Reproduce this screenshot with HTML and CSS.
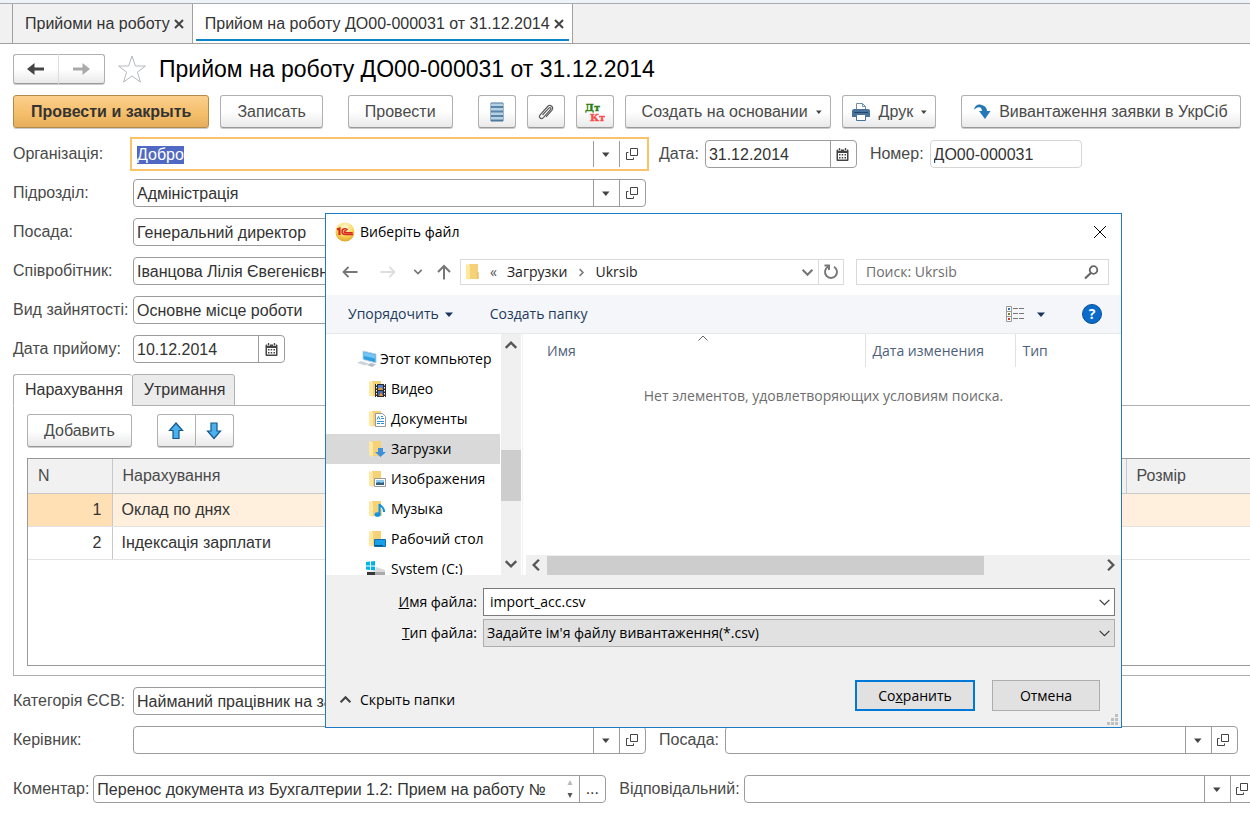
FILE: index.html
```html
<!DOCTYPE html>
<html lang="uk">
<head>
<meta charset="utf-8">
<title>Прийом на роботу ДО00-000031 от 31.12.2014</title>
<link rel="stylesheet" href="styles.css">
</head>
<body>
<svg class="defs" aria-hidden="true">
  <symbol id="caret" viewBox="0 0 8 5"><path d="M0 0.500h7.500L3.800 5z" fill="#444"/></symbol>
  <symbol id="open" viewBox="0 0 13 13"><path d="M4.5 0.5h7v7h-7z" fill="none" stroke="#444"/><path d="M2.5 4.5h-2v7h7v-2" fill="none" stroke="#444"/></symbol>
  <symbol id="calendar" viewBox="0 0 13 13"><path d="M1.500 1.500h10a1 1 0 0 1 1 1v9.500a1 1 0 0 1-1 1h-10a1 1 0 0 1-1-1v-9.500a1 1 0 0 1 1-1z" fill="#444"/><path d="M2 5h9v6.500H2z" fill="#fff"/><path d="M3 6h1.500v1.500H3zM5.700 6h1.500v1.500H5.700zM8.500 6H10v1.500H8.500zM3 9h1.500v1.500H3zM5.700 9h1.500v1.500H5.700zM8.500 9H10v1.500H8.500z" fill="#444"/><path d="M3.500 0v3M9.500 0v3" stroke="#fff" stroke-width="2.500"/><path d="M3.500 0v2.500M9.500 0v2.500" stroke="#444" stroke-width="1.300"/></symbol>
  <symbol id="folder" viewBox="0 0 16 16"><path d="M3 0h9v15H3z" fill="#f5d177"/><path d="M0 0l4 1.500V16l-4-1.500z" fill="#ffe9a2"/><path d="M12 8v7" stroke="#dbb04c"/></symbol>
  <symbol id="chev-down" viewBox="0 0 12 12"><path d="M1.500 3.500L6 8l4.500-4.500" fill="none" stroke="currentColor" stroke-width="2"/></symbol>
  <symbol id="chev-thin" viewBox="0 0 12 12"><path d="M1.500 3.500L6 8l4.500-4.500" fill="none" stroke="currentColor"/></symbol>
  <symbol id="chev-up" viewBox="0 0 12 12"><path d="M1.500 8.500L6 4l4.500 4.500" fill="none" stroke="currentColor" stroke-width="2"/></symbol>
  <symbol id="chev-left" viewBox="0 0 12 12"><path d="M8.500 1.500L4 6l4.500 4.500" fill="none" stroke="currentColor" stroke-width="2"/></symbol>
  <symbol id="chev-right" viewBox="0 0 12 12"><path d="M3.500 1.500L8 6l-4.500 4.500" fill="none" stroke="currentColor" stroke-width="2"/></symbol>
</svg>

<nav class="doc-tabs">
  <div class="doc-tab"><a href="#list">Прийоми на роботу</a><button type="button" class="tab-close" aria-label="Закрити"><svg width="10" height="10" viewBox="0 0 10 10"><path d="M1 1l8 8M9 1L1 9" stroke="#444" stroke-width="2"/></svg></button></div>
  <div class="doc-tab active"><a href="#doc">Прийом на роботу ДО00-000031 от 31.12.2014</a><button type="button" class="tab-close" aria-label="Закрити"><svg width="10" height="10" viewBox="0 0 10 10"><path d="M1 1l8 8M9 1L1 9" stroke="#444" stroke-width="2"/></svg></button></div>
</nav>

<main class="document">
  <header class="heading">
    <div class="btn-group history">
      <button type="button" class="btn" aria-label="Назад"><svg width="18" height="14" viewBox="0 0 18 14"><path d="M0 7l7.500-6v4.500H17v3H7.500V13z" fill="#444"/></svg></button>
      <button type="button" class="btn" aria-label="Вперед"><svg width="18" height="14" viewBox="0 0 18 14"><path d="M17 7l-7.500-6v4.500H0v3h9.500V13z" fill="#aaa"/></svg></button>
    </div>
    <button type="button" class="star" aria-label="Вибране"><svg width="30" height="28" viewBox="0 0 30 28"><path d="M15 1l3.400 10h10.100l-8.100 6.200 3.100 9.800-8.500-6-8.500 6 3.100-9.800L1.500 11h10.100z" fill="#fff" stroke="#b4b8bd"/></svg></button>
    <h1>Прийом на роботу ДО00-000031 от 31.12.2014</h1>
  </header>

  <div class="commands">
    <button type="button" class="btn primary">Провести и закрыть</button>
    <button type="button" class="btn">Записать</button>
    <button type="button" class="btn spaced">Провести</button>
    <button type="button" class="btn icon spaced" aria-label="Список"><svg width="14" height="20" viewBox="0 0 14 20"><path d="M1 1h12v18H1z" fill="#5b86a8" stroke="#47708f"/><path d="M1 1.500h12v2.500H1zM1 6h12v2.500H1zM1 10.500h12v2.500H1zM1 15h12v2.500H1z" fill="#b5d1e6"/></svg></button>
    <button type="button" class="btn icon" aria-label="Файли"><svg width="18" height="18" viewBox="0 0 18 18"><path d="M5.500 12l6.300-6.800c1.300-1.300 2.900 0 1.600 1.500l-7 7.900c-2.400 2.300-5.300-.2-3.300-2.700l7.500-8.400c2.700-2.600 6.700.6 4.200 3.800l-5.800 6.600" fill="none" stroke="#5a5a5a" stroke-width="1.200"/></svg></button>
    <button type="button" class="btn icon" aria-label="Проводки"><svg width="20" height="20" viewBox="0 0 20 20"><g font-family="DejaVu Serif, serif" font-weight="bold" font-size="10" stroke-width=".4"><text x="0" y="9" fill="#2b7d11" stroke="#2b7d11">Дт</text><text x="5" y="19" fill="#fb4c4c" stroke="#fb4c4c">Кт</text></g></svg></button>
    <button type="button" class="btn create">Создать на основании<svg class="drop" width="6" height="4"><use href="#caret"/></svg></button>
    <button type="button" class="btn print"><svg width="18" height="18" viewBox="0 0 18 18"><path d="M4.500 7V.5h6l3 3V7z" fill="#fff" stroke="#6d8fae"/><path d="M10.500.5v3h3" fill="none" stroke="#6d8fae"/><path d="M2 6h14a2 2 0 0 1 2 2v6H0V8a2 2 0 0 1 2-2z" fill="#4b7299"/><path d="M2 9.500h14" stroke="#21486d"/><path d="M4.500 11.500h9v6h-9z" fill="#fff" stroke="#4b7299"/></svg>Друк<svg class="drop" width="6" height="4"><use href="#caret"/></svg></button>
    <button type="button" class="btn export spaced"><svg width="17" height="16" viewBox="0 0 17 16"><path d="M0 5.500C1 1 4 0 7 .7c4 .8 6 3.300 6 6.300h3.500L11 15 5 7h3c0-2.500-1.500-4-3.500-3.700C3 3.500 2 4.300 0 5.500z" fill="#2478b5"/></svg>Вивантаження заявки в УкрСіб</button>
  </div>

  <form class="details">
    <div class="row">
      <label class="lbl" for="org">Організація:</label>
      <div class="field focused"><input id="org" value="Добро"><button type="button" aria-label="Список"><svg width="8" height="5"><use href="#caret"/></svg></button><button type="button" aria-label="Відкрити"><svg width="13" height="13"><use href="#open"/></svg></button></div>
      <label class="lbl-inline" for="date">Дата:</label>
      <div class="field date"><input id="date" value="31.12.2014"><button type="button" aria-label="Календар"><svg width="13" height="13"><use href="#calendar"/></svg></button></div>
      <label class="lbl-inline" for="num">Номер:</label>
      <div class="field date quiet"><input id="num" value="ДО00-000031"></div>
    </div>
    <div class="row">
      <label class="lbl" for="dep">Підрозділ:</label>
      <div class="field"><input id="dep" value="Адміністрація"><button type="button" aria-label="Список"><svg width="8" height="5"><use href="#caret"/></svg></button><button type="button" aria-label="Відкрити"><svg width="13" height="13"><use href="#open"/></svg></button></div>
    </div>
    <div class="row">
      <label class="lbl" for="post">Посада:</label>
      <div class="field"><input id="post" value="Генеральний директор"></div>
    </div>
    <div class="row">
      <label class="lbl" for="emp">Співробітник:</label>
      <div class="field"><input id="emp" value="Іванцова Лілія Євегенієвна"></div>
    </div>
    <div class="row">
      <label class="lbl" for="kind">Вид зайнятості:</label>
      <div class="field"><input id="kind" value="Основне місце роботи"></div>
    </div>
    <div class="row">
      <label class="lbl" for="start">Дата прийому:</label>
      <div class="field date"><input id="start" value="10.12.2014"><button type="button" aria-label="Календар"><svg width="13" height="13"><use href="#calendar"/></svg></button></div>
    </div>
  </form>

  <section class="pages">
    <div class="page-tabs"><button type="button" class="page-tab current">Нарахування</button><button type="button" class="page-tab">Утримання</button></div>
    <div class="page">
      <div class="page-tools">
        <button type="button" class="btn">Добавить</button>
        <div class="btn-group move">
          <button type="button" class="btn" aria-label="Вгору"><svg width="16" height="18" viewBox="0 0 16 18"><path d="M8 1l6.500 7.500H11V16.500H5V8.500H1.500z" fill="#4ab0ee" stroke="#12588c" stroke-width="1.200"/></svg></button>
          <button type="button" class="btn" aria-label="Вниз"><svg width="16" height="18" viewBox="0 0 16 18"><path d="M8 16.500L1.500 9H5V1h6v8h3.500z" fill="#4ab0ee" stroke="#12588c" stroke-width="1.200"/></svg></button>
        </div>
      </div>
      <div class="grid">
        <table>
          <colgroup><col class="c-num"><col><col class="c-size"></colgroup>
          <thead><tr><th>N</th><th>Нарахування</th><th>Розмір</th></tr></thead>
          <tbody>
            <tr class="selected"><td class="num">1</td><td>Оклад по днях</td><td></td></tr>
            <tr><td class="num">2</td><td>Індексація зарплати</td><td></td></tr>
          </tbody>
        </table>
      </div>
    </div>
  </section>

  <form class="details bottom">
    <div class="row">
      <label class="lbl" for="cat">Категорія ЄСВ:</label>
      <div class="field"><input id="cat" value="Найманий працівник на за"></div>
    </div>
    <div class="row">
      <label class="lbl" for="chief">Керівник:</label>
      <div class="field"><input id="chief"><button type="button" aria-label="Список"><svg width="8" height="5"><use href="#caret"/></svg></button><button type="button" aria-label="Відкрити"><svg width="13" height="13"><use href="#open"/></svg></button></div>
      <label class="lbl-inline" for="chiefpost">Посада:</label>
      <div class="field"><input id="chiefpost"><button type="button" aria-label="Список"><svg width="8" height="5"><use href="#caret"/></svg></button><button type="button" aria-label="Відкрити"><svg width="13" height="13"><use href="#open"/></svg></button></div>
    </div>
    <div class="row last">
      <label for="comment">Коментар:</label>
      <div class="field"><input id="comment" value="Перенос документа из Бухгалтерии 1.2: Прием на работу №"><span class="spin"><svg width="6" height="18" viewBox="0 0 6 18"><path d="M3 0l2.500 5h-5z" fill="#bbb"/><path d="M3 18l2.500-5h-5z" fill="#555"/></svg></span><button type="button" aria-label="Вибрати">...</button></div>
      <label class="lbl-inline" for="resp">Відповідальний:</label>
      <div class="field"><input id="resp"><button type="button" aria-label="Список"><svg width="8" height="5"><use href="#caret"/></svg></button><button type="button" aria-label="Відкрити"><svg width="13" height="13"><use href="#open"/></svg></button></div>
    </div>
  </form>
</main>

<div class="dialog" role="dialog" aria-labelledby="dlg-title">
  <div class="dlg-title">
    <svg width="20" height="20" viewBox="0 0 20 20"><defs><radialGradient id="ball" cx="50%" cy="25%" r="75%"><stop offset="0" stop-color="#fffbd8"/><stop offset=".6" stop-color="#f9d65c"/><stop offset="1" stop-color="#e2a52c"/></radialGradient></defs><circle cx="10" cy="10" r="9.500" fill="url(#ball)"/><path d="M2 7.500L4.500 6.500v6.500" fill="none" stroke="#d7281f" stroke-width="2.200"/><path d="M12.500 8C11.500 6 7 6 7 9.500c0 2 1.500 3 3.500 3H18M11.500 9.300C10.500 8.300 9 9 9.200 10c.2.700 1 .7 2 .7h6.500" fill="none" stroke="#d7281f" stroke-width="1.500"/></svg>
    <h2 id="dlg-title">Виберіть файл</h2>
    <button type="button" class="plain" aria-label="Закрыть"><svg width="12" height="12" viewBox="0 0 12 12"><path d="M0 0l12 12M12 0L0 12" stroke="#000"/></svg></button>
  </div>

  <div class="dlg-nav">
    <button type="button" class="plain nav-back" aria-label="Назад"><svg width="16" height="12" viewBox="0 0 16 12"><path d="M15.500 6H1.500M6.500 1l-5 5 5 5" fill="none" stroke="#777" stroke-width="1.800"/></svg></button>
    <button type="button" class="plain nav-next" aria-label="Вперед"><svg width="16" height="12" viewBox="0 0 16 12"><path d="M.5 6h14M9.500 1l5 5-5 5" fill="none" stroke="#ddd" stroke-width="1.800"/></svg></button>
    <button type="button" class="plain nav-recent" aria-label="Последние"><svg width="10" height="10"><use href="#chev-down"/></svg></button>
    <button type="button" class="plain nav-up" aria-label="Вверх"><svg width="14" height="16" viewBox="0 0 14 16"><path d="M7 15.500V2M1 8l6-6 6 6" fill="none" stroke="#777" stroke-width="2"/></svg></button>
    <div class="address">
      <svg width="16" height="16"><use href="#folder"/></svg>
      <span class="laquo">«</span><a href="#downloads">Загрузки</a><svg class="sep" width="9" height="9"><use href="#chev-right"/></svg><a href="#ukrsib">Ukrsib</a>
      <button type="button" class="plain addr-list" aria-label="Список"><svg width="13" height="13"><use href="#chev-down"/></svg></button>
      <button type="button" class="plain refresh" aria-label="Обновить"><svg width="16" height="16" viewBox="0 0 16 16"><path d="M11 2.800a6 6 0 1 1-6 0M1.500 1.500H6V6" fill="none" stroke="#777" stroke-width="1.900"/></svg></button>
    </div>
    <div class="search"><input type="text" aria-label="Поиск" placeholder="Поиск: Ukrsib"><svg width="15" height="15" viewBox="0 0 15 15"><circle cx="9.500" cy="5" r="3.800" fill="none" stroke="#666" stroke-width="1.800"/><path d="M6.800 8L1 13.500" stroke="#666" stroke-width="2.200"/></svg></div>
  </div>

  <div class="dlg-tools">
    <button type="button" class="plain">Упорядочить<svg width="8" height="5" viewBox="0 0 8 5"><path d="M0 .5h8L4 5z" fill="#1b355c"/></svg></button>
    <button type="button" class="plain">Создать папку</button>
    <button type="button" class="plain view" aria-label="Вид"><svg width="18" height="16" viewBox="0 0 18 16"><path d="M.5.500h5v15h-5zM.5 5.500h5M.5 10.500h5" fill="#fff" stroke="#999"/><path d="M7 2.500h5M13 2.500h5M7 7.500h5M13 7.500h5M7 12.500h5M13 12.500h5" stroke="#777"/><path d="M2 2h2v2H2z" fill="#2b78c5"/><path d="M2 7h2v2H2z" fill="#7a8022"/><path d="M2 12h2v2H2z" fill="#d33a1f"/></svg><svg width="8" height="5" viewBox="0 0 8 5"><path d="M0 .5h8L4 5z" fill="#1b355c"/></svg></button>
    <button type="button" class="help" aria-label="Справка">?</button>
  </div>

  <div class="dlg-body">
    <div class="tree-wrap">
      <ul class="tree">
        <li class="root"><svg width="20" height="18" viewBox="0 0 20 18"><path d="M6 1l13 3v9L6 9.500z" fill="#2f9fe2" stroke="#c5d5e0"/><path d="M7 2l11 2.700v3.800L7 6z" fill="#73c5f3"/><path d="M0 13l4-2 8 2.500-4 2z" fill="#cdd5dc"/><path d="M10 15l4-2 5 1.500-4 2.500z" fill="#b5bec6"/></svg>Этот компьютер</li>
        <li><svg width="17" height="16" viewBox="0 0 17 16"><use href="#folder" width="16" height="16"/><path d="M6 3h11v13H6z" fill="#2b2b2b"/><path d="M9 4h5v5H9z" fill="#4c7fce"/><path d="M9 10h5v5H9z" fill="#3f65b1"/><path d="M9 8l3-2 2 3H9zM10 15l2-4 2 4z" fill="#e09a35"/><path d="M7.500 3v13M15.500 3v13" stroke="#fff" stroke-dasharray="1.500 1.500"/></svg>Видео</li>
        <li><svg width="17" height="16" viewBox="0 0 17 16"><use href="#folder" width="16" height="16"/><path d="M6.500 2.500h7l3 3v10h-10z" fill="#fff" stroke="#999"/><path d="M8 8.500l1.500-3 1.500 3M12 5.500h2M12 7.500h3M8 10.500h7M8 12.500h3M12 12.500h3" fill="none" stroke="#2c8fd8"/></svg>Документы</li>
        <li class="picked"><svg width="17" height="16" viewBox="0 0 17 16"><use href="#folder" width="16" height="16"/><path d="M9 7h5v4h3l-5.500 5L6 11h3z" fill="#3b8fdd"/></svg>Загрузки</li>
        <li><svg width="17" height="16" viewBox="0 0 17 16"><use href="#folder" width="16" height="16"/><path d="M5.500 7.500h11v8h-11z" fill="#fff" stroke="#999"/><path d="M7 9h8v5H7z" fill="#8ccaf2"/><path d="M7 12c3-2 5 1 8-1v3H7z" fill="#315f7c"/></svg>Изображения</li>
        <li><svg width="17" height="16" viewBox="0 0 17 16"><use href="#folder" width="16" height="16"/><path d="M10.500 13.500V3c1 3 5 3 4.500 8" fill="none" stroke="#1292e0" stroke-width="2"/><ellipse cx="8.500" cy="13.500" rx="3" ry="2.300" fill="#1292e0"/></svg>Музыка</li>
        <li><svg width="17" height="16" viewBox="0 0 17 16"><use href="#folder" width="16" height="16"/><path d="M5.500 8.500h11v7h-11z" fill="#15a0ea" stroke="#1271ad"/><path d="M6 14.500h8" stroke="#0b578b"/></svg>Рабочий стол</li>
        <li class="drive"><svg width="20" height="16" viewBox="0 0 20 16"><path d="M0 1l4-.5V4.500H0zM5 .4L9 0v4.500H5zM0 5.500h4V9l-4-.5zM5 5.500h4v4L5 9z" fill="#00b3f0"/><path d="M10 6l9 3v3L1 12v-1.500h8z" fill="#d9d9d9"/><path d="M1 11h8l1 5H1z" fill="#3a3a3a"/><path d="M9 11h10v5h-9z" fill="#aaa"/></svg>System (C:)</li>
      </ul>
      <div class="vbar"><svg width="14" height="14"><use href="#chev-up"/></svg><span class="thumb"></span><svg width="14" height="14"><use href="#chev-down"/></svg></div>
    </div>
    <div class="files">
      <svg class="sort" width="10" height="6" viewBox="0 0 10 6"><path d="M.5 5.500L5 1l4.500 4.500" fill="none" stroke="#666"/></svg>
      <table>
        <colgroup><col><col class="f-date"><col class="f-type"></colgroup>
        <thead><tr><th>Имя</th><th>Дата изменения</th><th>Тип</th></tr></thead>
        <tbody><tr><td colspan="3">Нет элементов, удовлетворяющих условиям поиска.</td></tr></tbody>
      </table>
      <div class="hbar"><svg width="14" height="14"><use href="#chev-left"/></svg><span class="rail"><span class="thumb"></span></span><svg width="14" height="14"><use href="#chev-right"/></svg></div>
    </div>
  </div>

  <div class="dlg-foot">
    <div class="save-row"><label for="fname"><u>И</u>мя файла:</label><div class="combo"><input id="fname" value="import_acc.csv"><svg width="13" height="13"><use href="#chev-thin"/></svg></div></div>
    <div class="save-row"><label for="ftype"><u>Т</u>ип файла:</label><div class="combo type"><select id="ftype"><option>Задайте ім'я файлу вивантаження(*.csv)</option></select><svg width="13" height="13"><use href="#chev-thin"/></svg></div></div>
    <div class="actions">
      <button type="button" class="plain hide-folders"><svg width="13" height="13"><use href="#chev-up"/></svg>Скрыть папки</button>
      <button type="button" class="win default">Со<u>х</u>ранить</button>
      <button type="button" class="win">Отмена</button>
    </div>
    <svg class="grip" width="11" height="11" viewBox="0 0 11 11"><path d="M8 0h3v3H8zM8 4h3v3H8zM4 4h3v3H4zM8 8h3v3H8zM4 8h3v3H4zM0 8h3v3H0z" fill="#bfbfbf"/></svg>
  </div>
</div>
<script src="app.js"></script>
</body>
</html>
```

FILE: styles.css
```css
* { box-sizing: border-box; }
body {
  margin: 0;
  min-height: 100vh;
  position: relative;
  overflow: hidden;
  background: #fff;
  color: #333;
  font: 16px/18px "Liberation Sans", Arial, sans-serif;
}
button, input, select { font: inherit; color: inherit; margin: 0; }
button { cursor: pointer; }
svg { flex: none; display: block; }
a { color: inherit; text-decoration: none; }
.defs { position: absolute; width: 0; height: 0; }

/* open documents */
.doc-tabs {
  display: flex;
  height: 44px;
  padding-left: 12px;
  border-top: 3px solid #edf3f8;
  border-bottom: 1px solid #a0a0a0;
  background: #f1f1f1;
  box-shadow: inset 0 1px #a8acb0;
}
.doc-tab {
  display: flex;
  align-items: center;
  gap: 4px;
  padding: 0 8px 0 12px;
  border-left: 1px solid #a0a0a0;
  margin-top: 1px;
}
.doc-tab.active {
  padding: 0 8px 0 12px;
  border-right: 1px solid #a0a0a0;
  background: linear-gradient(#0d84c9, #0d84c9) center bottom 2px / calc(100% - 6px) 2px no-repeat #fff;
}
.tab-close { padding: 0; border: 0; background: none; }

/* document header */
.document { padding: 9px 0 0 13px; }
.heading { display: flex; align-items: center; height: 32px; }
.heading h1 { margin: 0; font-size: 23px; line-height: 30px; font-weight: normal; color: #000; white-space: nowrap; }
.star { padding: 0; border: 0; background: none; margin: 0 12px; }
.btn {
  display: flex;
  align-items: center;
  justify-content: center;
  height: 33px;
  padding: 0 16px;
  border: 1px solid #b0b0b0;
  border-bottom-color: #999;
  border-radius: 3px;
  background: linear-gradient(#fff 50%, #e9e9e9);
  box-shadow: 0 1px #ccc;
  color: #4a4a4a;
  white-space: nowrap;
}
.btn-group { display: flex; }
.btn-group .btn { padding: 0; width: 46px; }
.btn-group .btn:first-child { border-radius: 3px 0 0 3px; }
.btn-group .btn:last-child { border-radius: 0 3px 3px 0; border-left-width: 0; }
.history .btn { height: 30px; }
.history .btn:first-child { width: 46px; border-right-color: #ddd; }
.commands { display: flex; gap: 11px; margin-top: 10px; }
.commands .spaced { margin-left: 14px; }
.btn.primary {
  padding: 0 17px;
  background: linear-gradient(#fbcf8c, #f4bd69 60%, #e6ae5c);
  border-color: #b38b48;
  font-weight: bold;
  color: #333;
}
.btn.icon { width: 38px; padding: 0; }
.btn .drop { margin-left: 8px; margin-right: -8px; }
.btn.print { padding-left: 9px; }
.btn.print > svg:first-child { margin-right: 9px; }
.btn.export { padding: 0 12px; }
.btn.export > svg { margin-right: 8px; }

/* fields */
.details { display: flex; flex-direction: column; gap: 11px; padding-top: 12px; }
.row { display: flex; align-items: center; color: #4a4a4a; white-space: nowrap; }
.lbl { width: 120px; flex: none; }
.lbl-inline { margin: 0 6px 0 13px; }
.field {
  display: flex;
  flex: none;
  width: 513px;
  height: 28px;
  border: 1px solid #9c9c9c;
  border-radius: 4px;
  background: #fff;
  color: #333;
}
.field input {
  flex: 1;
  min-width: 0;
  padding: 2px 3px 0;
  border: 0;
  outline: 0;
  background: none;
}
.field button {
  display: flex;
  align-items: center;
  justify-content: center;
  width: 26px;
  padding: 0 1px 0 0;
  border: 0;
  border-left: 1px solid #9c9c9c;
  background: none;
}
.field.date { width: 152px; }
.field.quiet { border-color: #d5d5d5; }
.field.focused { border-color: transparent; border-radius: 0; outline: 2px solid #fbc26c; outline-offset: 1px; }
.field input::selection { background: #4f69c2; color: #fff; }
.spin { display: flex; align-items: center; padding-right: 6px; }
.details.bottom { padding-top: 11px; }
.row.last { margin-top: 10px; }
.row.last > label { margin-right: 4px; }

/* tab pages */
.pages { padding-top: 11px; }
.page-tabs { display: flex; position: relative; }
.page-tab {
  height: 32px;
  padding: 0 9px 0 11px;
  border: 1px solid #b0b0b0;
  border-radius: 3px 3px 0 0;
  background: #ebebeb;
  color: #333;
}
.page-tab.current { background: #fff; border-bottom-color: #fff; border-right: 0; }
.page { margin-top: -1px; border: 1px solid #b0b0b0; border-right: 0; padding: 8px 0 9px 13px; }
.page-tools { display: flex; gap: 25px; }
.move .btn { width: 38px; }
.move .btn:first-child { width: 39px; }
.grid { margin-top: 11px; height: 208px; border: 1px solid #999; border-right: 0; }
.grid table { width: 100%; border-collapse: collapse; table-layout: fixed; }
.c-num { width: 84px; }
.c-size { width: 124px; }
.grid th {
  height: 34px;
  padding: 0 10px;
  background: #f1f1f1;
  border-right: 1px solid #c8c8c8;
  border-bottom: 1px solid #c8c8c8;
  text-align: left;
  font-weight: normal;
  color: #4a4a4a;
}
.grid th:last-child { border-right: 0; }
.grid td { height: 33px; padding: 1px 10px 0 9px; border-bottom: 1px solid #e2e2e2; }
.grid td.num { text-align: right; border-right: 1px solid #c8c8c8; }
.grid .selected td { background: #ffefdc; }
.grid .selected .num { background: #ffe0b4; }

/* file dialog */
.dialog {
  position: absolute;
  left: 325px;
  top: 213px;
  width: 797px;
  border: 1px solid #1e7ac6;
  background: #fff;
  color: #000;
  font: 14px/20px "Open Sans", "Noto Sans", sans-serif;
}
.plain { display: flex; align-items: center; padding: 0; border: 0; background: none; }
.dlg-title { display: flex; align-items: center; height: 36px; padding: 0 15px 0 9px; }
.dlg-title h2 { flex: 1; margin: 0 0 0 5px; font-size: 14px; font-weight: normal; }
.dlg-nav { display: flex; align-items: center; height: 45px; padding: 0 12px 1px 16px; }
.nav-next { margin-left: 22px; }
.nav-recent { margin-left: 17px; color: #777; }
.nav-up { margin: 0 9px 0 14px; }
.address { display: flex; align-items: center; flex: 1; height: 26px; border: 1px solid #d9d9d9; padding-left: 5px; margin-right: 12px; color: #222; }
.laquo { margin: 0 10px 0 8px; color: #555; }
.sep { margin: 0 9px 0 10px; color: #777; }
.addr-list { margin-left: auto; padding-right: 4px; color: #777; }
.refresh { height: 24px; padding: 0 4px; border-left: 1px solid #d9d9d9; }
.search { display: flex; align-items: center; width: 253px; height: 26px; border: 1px solid #d9d9d9; padding: 0 9px; }
.search input { flex: 1; min-width: 0; padding: 0; border: 0; outline: 0; background: none; }
.search input::placeholder { color: #6d6d6d; opacity: 1; }
.dlg-tools {
  display: flex;
  align-items: center;
  height: 39px;
  padding: 0 19px 0 22px;
  background: #f4f6f9;
  border-bottom: 1px solid #e6e8ea;
  color: #1f3a60;
}
.dlg-tools .plain { gap: 6px; margin-right: 37px; }
.dlg-tools .view { margin-left: auto; gap: 13px; }
.help { width: 20px; height: 20px; padding: 0; border: 1px solid #0c4f92; border-radius: 50%; background: #0a6bcb; color: #fff; font-weight: bold; line-height: 18px; text-align: center; }
.dlg-body { display: flex; height: 241px; overflow: hidden; }
.tree-wrap { display: flex; width: 197px; border-right: 1px solid #f2f2f2; }
.tree { flex: 1; margin: 0; padding: 10px 0 0; list-style: none; overflow: hidden; }
.tree li { display: flex; align-items: center; gap: 5px; height: 30px; padding-left: 43px; white-space: nowrap; }
.tree .root { padding-left: 31px; gap: 3px; }
.tree .drive { padding-left: 40px; }
.tree .picked { background: #d9d9d9; }
.vbar { display: flex; flex-direction: column; align-items: center; width: 20px; margin: 0 1px; padding: 4px 0; background: #f0f0f0; color: #555; }
.vbar .thumb { width: 100%; height: 51px; margin: 98px 0 auto; background: #cdcdcd; }
.files { position: relative; flex: 1; display: flex; flex-direction: column; padding-left: 3px; }
.files table { width: 100%; border-collapse: collapse; table-layout: fixed; }
.f-date { width: 150px; }
.f-type { width: 106px; }
.files th { height: 33px; padding: 0 7px; border-right: 1px solid #e2e2e2; text-align: left; font-weight: normal; color: #4e6079; }
.files th:first-child { padding-left: 21px; }
.files th:last-child { border-right: 0; }
.files td { height: 58px; padding: 0; text-align: center; color: #6d6d6d; }
.sort { position: absolute; left: 175px; top: 1px; }
.hbar { display: flex; align-items: center; gap: 4px; height: 20px; margin-top: auto; padding: 0 3px; background: #f0f0f0; color: #555; }
.rail { flex: 1; }
.rail .thumb { display: block; width: 79%; height: 19px; background: #cdcdcd; }
.dlg-foot { position: relative; background: #f0f0f0; padding: 13px 6px 16px 15px; }
.save-row { display: flex; align-items: center; margin-bottom: 3px; }
.save-row label { width: 136px; text-align: right; margin-right: 6px; }
.combo { display: flex; align-items: center; flex: 1; height: 28px; padding-right: 3px; border: 1px solid #7a7a7a; background: #fff; color: #333; }
.combo.type { background: #e1e1e1; border-color: #adadad; }
.combo input, .combo select { flex: 1; min-width: 0; padding: 0 6px; border: 0; outline: 0; background: none; color: #000; appearance: none; }
.combo select { padding: 0 3px; }
.actions { display: flex; align-items: center; gap: 17px; margin-top: 33px; padding-right: 15px; }
.hide-folders { gap: 8px; margin: 8px auto 0 -2px; }
.hide-folders svg { color: #444; }
.win { width: 108px; height: 31px; padding: 0; border: 1px solid #adadad; background: #e1e1e1; }
.win.default { width: 120px; border: 2px solid #0078d7; }
.grip { position: absolute; right: 3px; bottom: 2px; }
```

FILE: app.js
```js
const organisation = document.getElementById("org");
organisation.focus();
organisation.select();
```
